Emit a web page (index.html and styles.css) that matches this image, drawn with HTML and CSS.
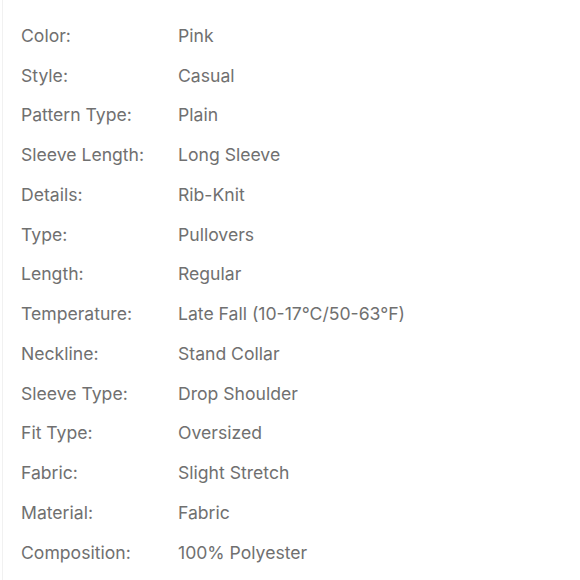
FILE: index.html
```html
<!DOCTYPE html>
<html>
<head>
<meta charset="utf-8">
<link rel="stylesheet" href="styles.css">
</head>
<body>
<div class="page">
  <dl class="specs">
    <div class="row"><dt>Color:</dt><dd>Pink</dd></div>
    <div class="row"><dt>Style:</dt><dd>Casual</dd></div>
    <div class="row"><dt>Pattern Type:</dt><dd>Plain</dd></div>
    <div class="row"><dt>Sleeve Length:</dt><dd>Long Sleeve</dd></div>
    <div class="row"><dt>Details:</dt><dd>Rib-Knit</dd></div>
    <div class="row"><dt>Type:</dt><dd>Pullovers</dd></div>
    <div class="row"><dt>Length:</dt><dd>Regular</dd></div>
    <div class="row"><dt>Temperature:</dt><dd>Late Fall (10-17°C/50-63°F)</dd></div>
    <div class="row"><dt>Neckline:</dt><dd>Stand Collar</dd></div>
    <div class="row"><dt>Sleeve Type:</dt><dd>Drop Shoulder</dd></div>
    <div class="row"><dt>Fit Type:</dt><dd>Oversized</dd></div>
    <div class="row"><dt>Fabric:</dt><dd>Slight Stretch</dd></div>
    <div class="row"><dt>Material:</dt><dd>Fabric</dd></div>
    <div class="row"><dt>Composition:</dt><dd>100% Polyester</dd></div>
  </dl>
</div>
</body>
</html>
```
FILE: styles.css
```css
html, body {
  margin: 0;
  padding: 0;
  background: #ffffff;
}
.page {
  width: 580px;
  height: 580px;
  box-sizing: border-box;
  border-left: 1px solid #f1f1f1;
  margin-left: 2px;
  padding: 16px 0 0 18px;
  overflow: hidden;
  font-family: Inter, "Noto Sans", sans-serif;
  font-size: 17.6px;
  color: #707070;
}
.specs {
  margin: 0;
  display: flex;
  flex-direction: column;
}
.row {
  display: grid;
  grid-template-columns: 157px 1fr;
  height: 39.75px;
  align-items: center;
}
dt, dd {
  margin: 0;
  line-height: 20px;
}
```
